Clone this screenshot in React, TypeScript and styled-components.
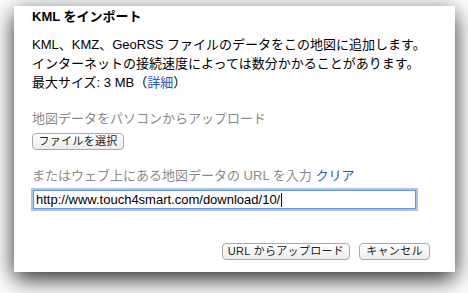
import React from "react";
import styled, { createGlobalStyle } from "styled-components";

const Global = createGlobalStyle`
  html, body { margin: 0; padding: 0; background: #ffffff; }
  body { width: 468px; height: 293px; overflow: hidden; font-family: "Liberation Sans", "Noto Sans CJK JP", sans-serif; }
`;

const Dialog = styled.div`
  box-sizing: border-box;
  margin: 6px 0 0 14px;
  width: 441px;
  height: 266px;
  background: #fff;
  box-shadow: 0 7px 22px rgba(0, 0, 0, 0.85);
  padding: 1px 25px 0 18px;
  display: flex;
  flex-direction: column;
  color: #000;
  font-size: 13px;
`;

const Title = styled.div`
  font-weight: bold;
  line-height: 20px;
  height: 20px;
`;

const Body = styled.div`
  margin-top: 7.5px;
  line-height: 19px;
  white-space: nowrap;
`;

const Link = styled.a`
  color: #1f55c9;
  text-decoration: none;
`;

const Label = styled.div<{ $top: number }>`
  margin-top: ${(p) => p.$top}px;
  line-height: 19px;
  color: #8a8a8a;
  white-space: nowrap;
`;

const Button = styled.button<{ $w: number }>`
  box-sizing: border-box;
  width: ${(p) => p.$w}px;
  height: 17px;
  padding: 0;
  border: 1px solid #a9a9a9;
  border-radius: 4px;
  background: linear-gradient(#ffffff, #ececec);
  font-family: "Liberation Sans", "Noto Sans CJK JP", sans-serif;
  font-size: 11px;
  line-height: 15px;
  letter-spacing: 0.3px;
  color: #222;
  white-space: nowrap;
`;

const ButtonRow = styled.div`
  margin-top: 5.5px;
  display: flex;
`;

const Footer = styled.div`
  margin-top: 34px;
  display: flex;
  justify-content: flex-end;
  gap: 9px;
`;

const Field = styled.div`
  box-sizing: border-box;
  margin: 5.5px 0 0 1px;
  width: 383px;
  height: 19px;
  border: 1px solid #6a93d3;
  box-shadow: 0 0 0 2px rgba(120, 165, 230, 0.65);
  padding: 0 0 0 2px;
  display: flex;
  align-items: center;
  font-size: 13px;
  line-height: 17px;
  color: #000;
  white-space: nowrap;
`;

const Caret = styled.span`
  display: inline-block;
  width: 1px;
  height: 14px;
  background: #000;
  margin-left: 1px;
`;

export default function App() {
  return (
    <>
      <Global />
      <Dialog>
        <Title>KML をインポート</Title>
        <Body>
          KML、KMZ、GeoRSS ファイルのデータをこの地図に追加します。
          <br />
          インターネットの接続速度によっては数分かかることがあります。
          <br />
          最大サイズ: 3 MB（<Link href="#">詳細</Link>）
        </Body>
        <Label $top={17}>地図データをパソコンからアップロード</Label>
        <ButtonRow>
          <Button $w={92}>ファイルを選択</Button>
        </ButtonRow>
        <Label $top={15.5}>
          またはウェブ上にある地図データの URL を入力 <Link href="#">クリア</Link>
        </Label>
        <Field>
          http://www.touch4smart.com/download/10/
          <Caret />
        </Field>
        <Footer>
          <Button $w={128}>URL からアップロード</Button>
          <Button $w={71}>キャンセル</Button>
        </Footer>
      </Dialog>
    </>
  );
}
